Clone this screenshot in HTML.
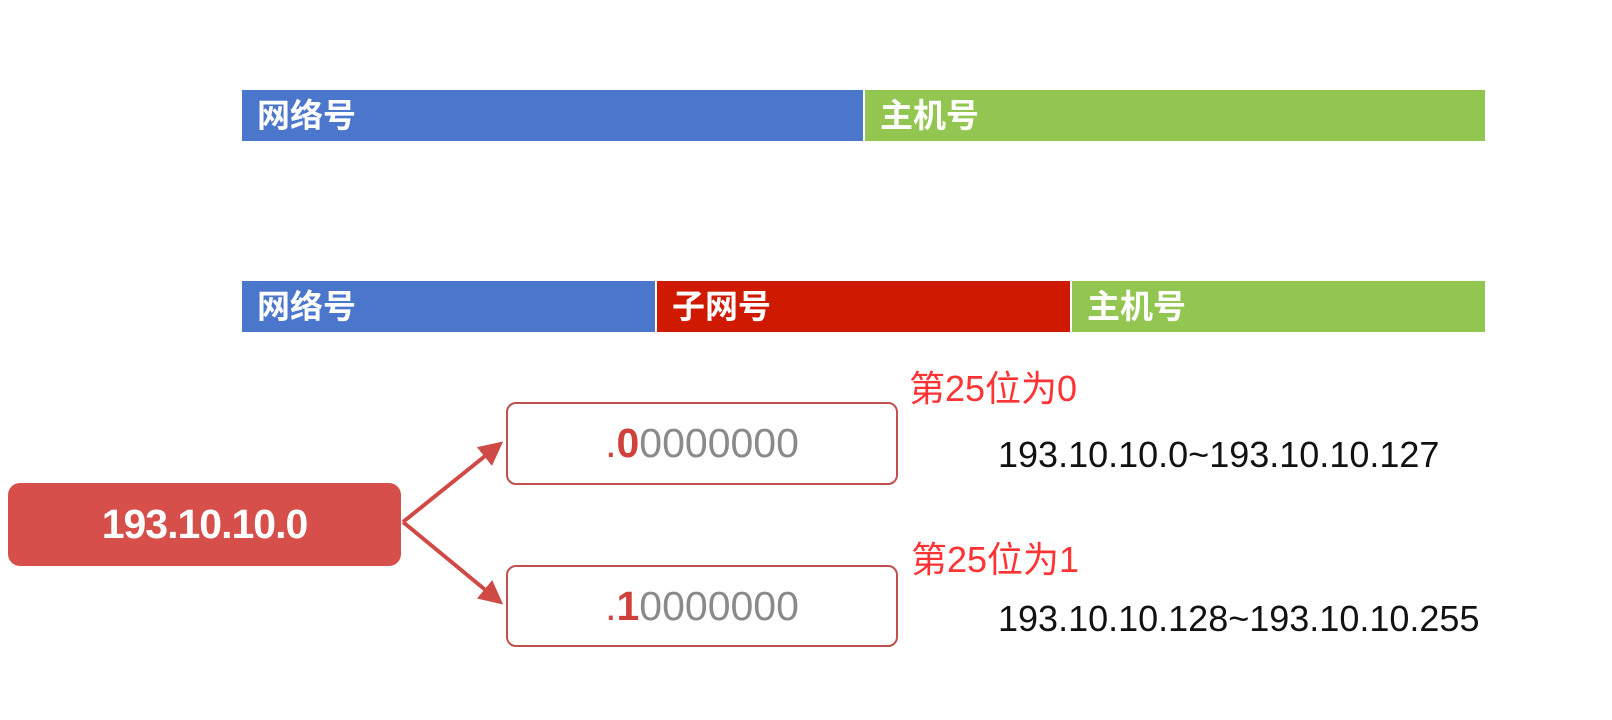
<!DOCTYPE html>
<html><head><meta charset="utf-8"><style>
body{margin:0;width:1612px;height:720px;background:#fff;position:relative;overflow:hidden;font-family:"Liberation Sans","Noto Sans CJK SC",sans-serif}
.b{position:absolute;color:#fff;font-size:33px;font-weight:bold;line-height:51px;padding-left:15px;box-sizing:border-box;height:51px}
.t{position:absolute;white-space:nowrap}
.ob{position:absolute;border:2px solid #c0504d;border-radius:10px;box-sizing:border-box;text-align:center;font-size:41px;color:#8a8a8a;line-height:78px}
.ob span{color:#d0413c}
</style></head><body>
<div class="b" style="left:242px;top:90px;width:621px;background:#4a76cc">网络号</div>
<div class="b" style="left:865px;top:90px;width:620px;background:#92c650">主机号</div>
<div class="b" style="left:242px;top:281px;width:413px;background:#4a76cc">网络号</div>
<div class="b" style="left:657px;top:281px;width:413px;background:#d01a00">子网号</div>
<div class="b" style="left:1072px;top:281px;width:413px;background:#92c650">主机号</div>
<div style="position:absolute;left:8px;top:483px;width:393px;height:83px;background:#d64f4a;border-radius:12px;color:#fff;font-weight:bold;font-size:41px;text-align:center;line-height:83px;letter-spacing:-1px">193.10.10.0</div>
<svg style="position:absolute;left:0;top:0" width="1612" height="720">
<defs><marker id="a" markerWidth="6" markerHeight="6" refX="5" refY="3" orient="auto"><path d="M0,0L6,3L0,6z" fill="#d04a45"/></marker></defs>
<line x1="403" y1="522" x2="500" y2="444" stroke="#d04a45" stroke-width="4" marker-end="url(#a)"/>
<line x1="403" y1="522" x2="500" y2="602" stroke="#d04a45" stroke-width="4" marker-end="url(#a)"/>
</svg>
<div class="ob" style="left:506px;top:402px;width:392px;height:83px"><span>.<b>0</b></span>0000000</div>
<div class="ob" style="left:506px;top:565px;width:392px;height:82px"><span>.<b>1</b></span>0000000</div>
<div class="t" style="left:909px;top:360px;font-size:36px;color:#ff3333">第25位为0</div>
<div class="t" style="left:911px;top:531px;font-size:36px;color:#ff3333">第25位为1</div>
<div class="t" style="left:998px;top:434px;font-size:36px;color:#111">193.10.10.0~193.10.10.127</div>
<div class="t" style="left:998px;top:598px;font-size:36px;color:#111">193.10.10.128~193.10.10.255</div>
</body></html>
